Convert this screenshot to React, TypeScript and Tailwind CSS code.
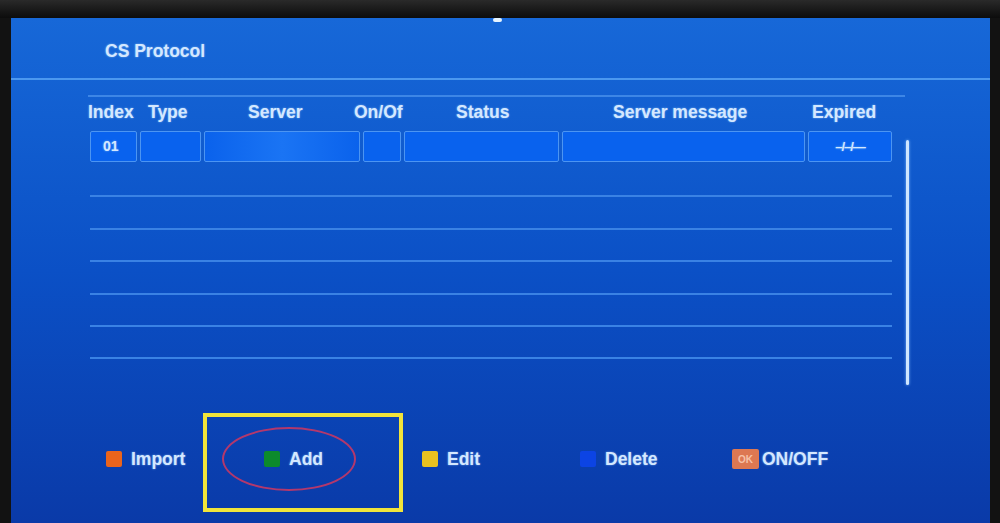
const headers = [
  { label: "Index", w: "w-[60px]" },
  { label: "Type", w: "w-[100px]" },
  { label: "Server", w: "w-[106px]" },
  { label: "On/Of", w: "w-[102px]" },
  { label: "Status", w: "w-[157px]" },
  { label: "Server message", w: "w-[199px]" },
  { label: "Expired", w: "w-[80px]" },
];

const cells = [
  { w: "w-[47px]", text: "01", cls: "pl-[12px] text-[14px]" },
  { w: "w-[61px]", text: "", cls: "" },
  { w: "w-[156px]", text: "", cls: "bg-linear-to-r from-[#0a62ec] via-[#1a74f4] to-[#0a62ec]" },
  { w: "w-[38px]", text: "", cls: "" },
  { w: "w-[155px]", text: "", cls: "" },
  { w: "w-[243px]", text: "", cls: "" },
  { w: "w-[84px]", text: "–/–/—", cls: "justify-center text-[13px] tracking-[-1px]" },
];

const glow = "[text-shadow:0_0_2px_rgba(170,215,255,0.7)]";

export default function App() {
  return (
    <main className="flex h-[523px] w-[1000px] flex-col overflow-hidden bg-[#121212] font-['Liberation_Sans',Arial,sans-serif] text-[#d4e8ff]">
      <div className="h-[18px] bg-linear-to-b from-[#2a2a2a] to-[#0c0c0c]" />
      <div className="flex flex-1 pl-[11px] pr-[10px]">
        <section className="relative flex flex-1 flex-col bg-linear-to-b from-[#1768d8] via-[#0b50c6] to-[#0a3aa8]">
          <span className="absolute left-[482px] top-0 h-[4px] w-[9px] rounded-sm bg-[#e6f4ff] blur-[0.5px]" />

          <div className={`h-[60px] pl-[94px] pt-[20px] text-[17.5px] font-bold ${glow}`}>
            CS Protocol
          </div>
          <div className="h-[2px] bg-[#4b98f0]" />

          <div className="mt-[15px] flex pl-[77px]">
            <div className="w-[817px]">
              <div className="h-[2px] bg-[#3d86e6]" />
              <div className={`mb-[4px] flex h-[30px] items-center text-[17.5px] font-bold ${glow}`}>
                {headers.map((h) => (
                  <span key={h.label} className={`${h.w} shrink-0 whitespace-nowrap`}>
                    {h.label}
                  </span>
                ))}
              </div>
              <div className="ml-[2px] w-[802px]">
                <div className="flex h-[31px] gap-[3px]">
                  {cells.map((c, i) => (
                    <div
                      key={i}
                      className={`${c.w} flex shrink-0 items-center rounded-[2px] border border-[#4c95f2] bg-[#0962ee] font-bold ${glow} ${c.cls}`}
                    >
                      {c.text}
                    </div>
                  ))}
                </div>
                <div className="mt-[3px]">
                  {[0, 1, 2, 3, 4, 5].map((r) => (
                    <div key={r} className="h-[32.4px] border-b-2 border-[#3a82e4]" />
                  ))}
                </div>
              </div>
            </div>
            <div className="ml-[1px] mt-[45px] h-[245px] w-[3px] rounded-full bg-[#cfe6ff] shadow-[0_0_3px_#7fb8ff]" />
          </div>

          <div className={`mt-[54px] flex h-[40px] items-center pl-[95px] text-[17.5px] font-bold ${glow}`}>
            <LegendItem color="bg-[#ea641c]" label="Import" />
            <LegendItem color="bg-[#0c8a2c]" label="Add" />
            <LegendItem color="bg-[#e9c21f]" label="Edit" />
            <LegendItem color="bg-[#0c44e4]" label="Delete" />
            <div className="-ml-[6px] flex items-center">
              <span className="flex h-[20px] w-[27px] items-center justify-center rounded-[2px] bg-[#dd7852] text-[10px] font-bold text-[#f6c2a8] [text-shadow:none]">
                OK
              </span>
              <span className="ml-[3px]">ON/OFF</span>
            </div>
          </div>

          <div className="absolute left-[192px] top-[395px] h-[99px] w-[200px] border-[4px] border-[#f1e43a]" />
          <div className="absolute left-[211px] top-[409px] h-[64px] w-[134px] rounded-[50%] border-2 border-[#b3386c]" />
        </section>
      </div>
    </main>
  );
}

function LegendItem({ color, label }: { color: string; label: string }) {
  return (
    <div className="flex w-[158px] shrink-0 items-center">
      <span className={`h-[16px] w-[16px] rounded-[2px] ${color}`} />
      <span className="ml-[9px]">{label}</span>
    </div>
  );
}
